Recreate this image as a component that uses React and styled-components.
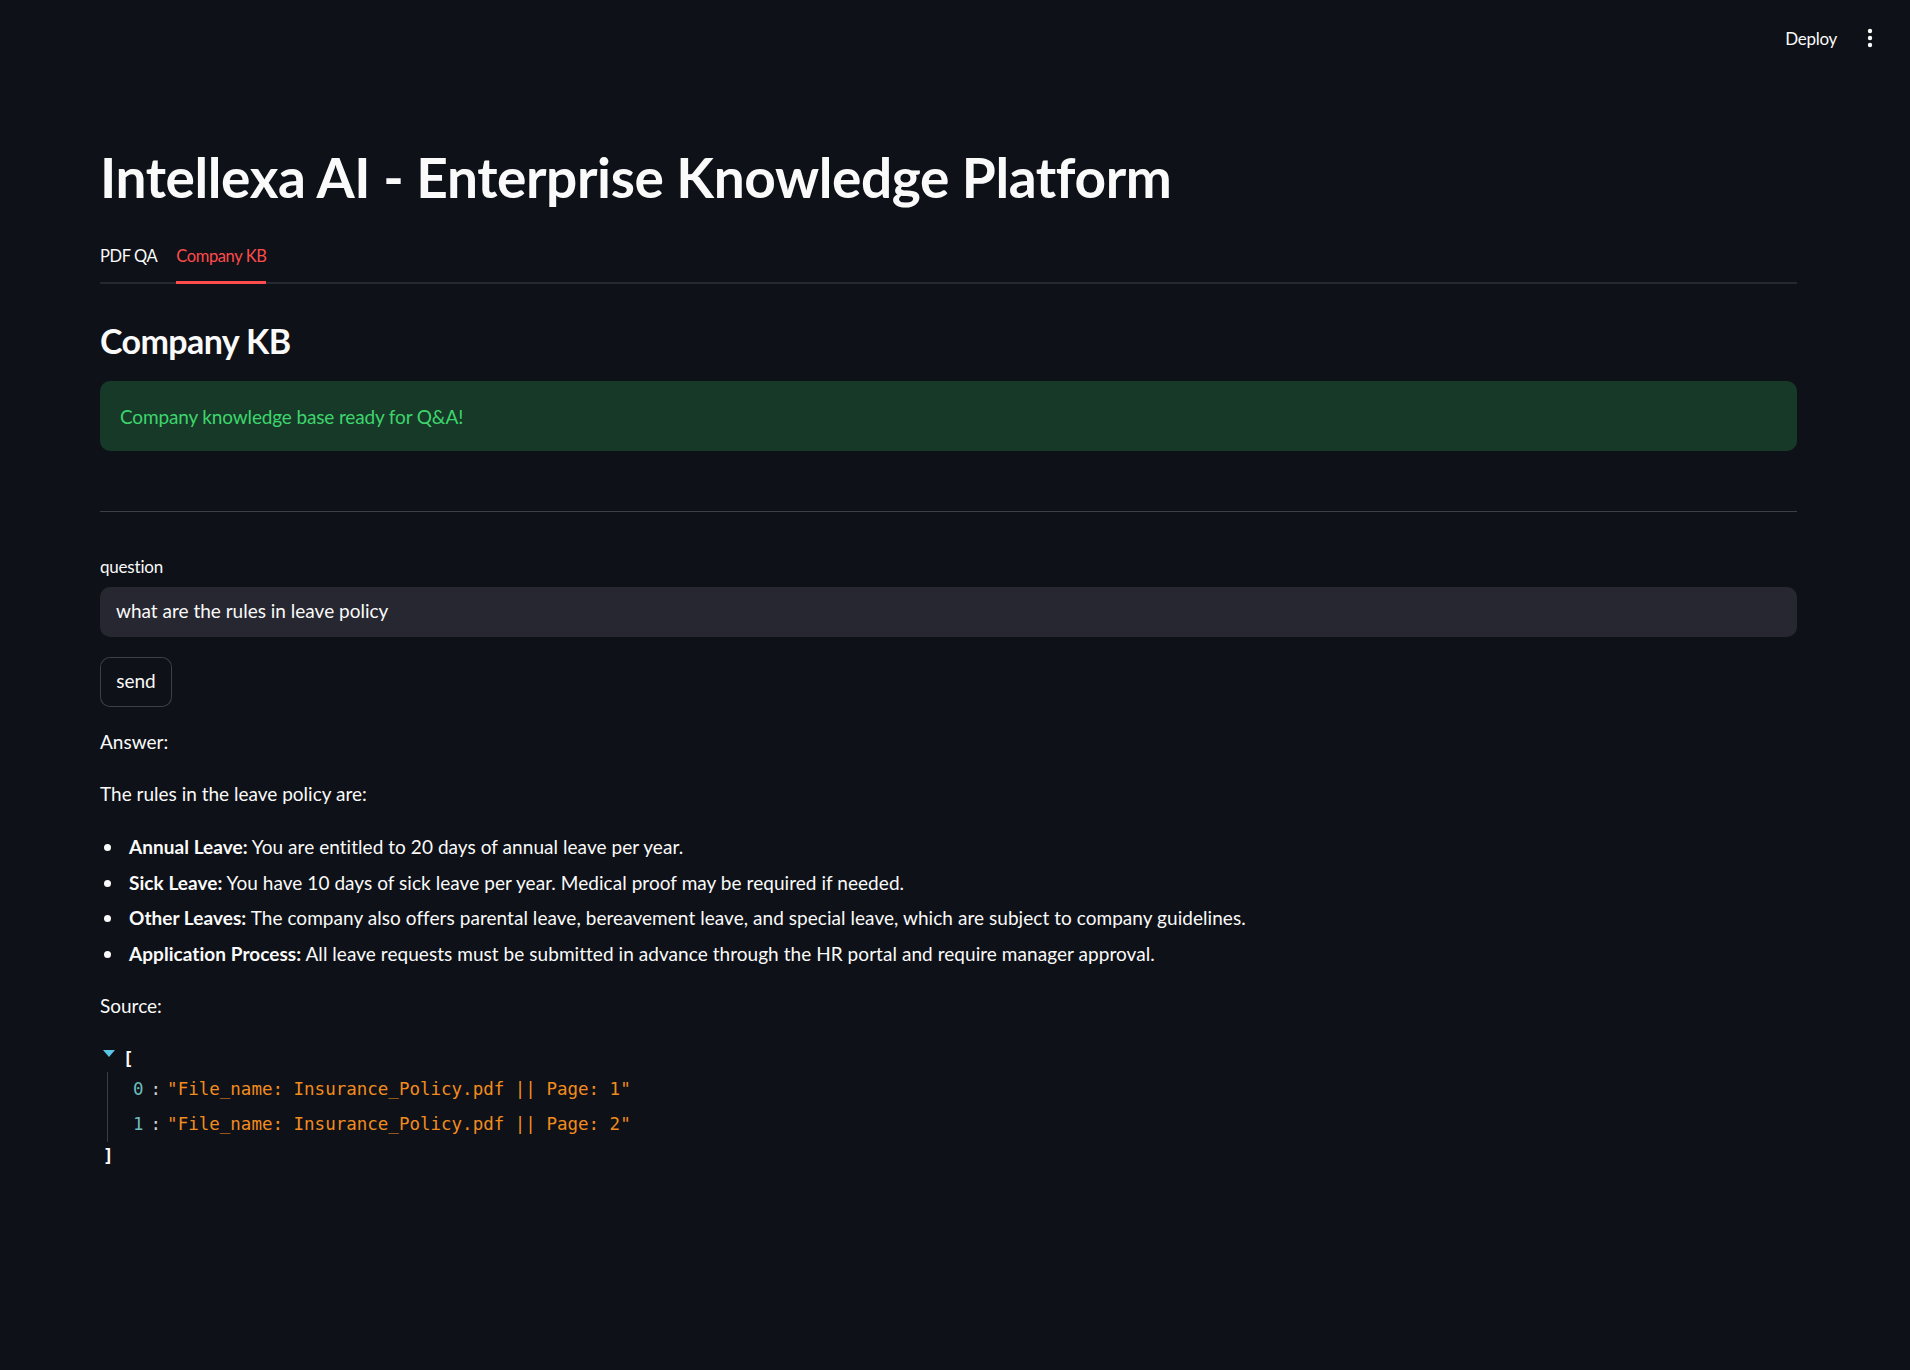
import React from 'react'
import styled, { createGlobalStyle } from 'styled-components'

const GlobalStyle = createGlobalStyle`
	html, body {
		margin: 0;
		padding: 0;
		background: #0e1117;
	}
	body {
		font-family: Lato, 'Noto Sans', sans-serif;
		color: #fafafa;
		min-height: 1370px;
	}
`

const Header = styled.header`
	height: 76px;
	display: flex;
	justify-content: flex-end;
	align-items: center;
	gap: 30px;
	padding-right: 37px;
	font-size: 17px;
`

const DeployLink = styled.span`
	color: #fafafa;
	letter-spacing: -0.3px;
`

const Main = styled.main`
	padding: 63px 113px 0 100px;
`

const Title = styled.h1`
	margin: 0;
	font-size: 55px;
	font-weight: 700;
	line-height: 76px;
	letter-spacing: -0.4px;
`

const TabList = styled.div`
	margin-top: 19px;
	display: flex;
	gap: 19px;
	border-bottom: 2px solid #262730;
	height: 48px;
`

const Tab = styled.div`
	display: flex;
	align-items: center;
	font-size: 16.5px;
	letter-spacing: -0.4px;
	color: ${(p) => (p.active ? '#ff4b4b' : '#fafafa')};
	border-bottom: 3px solid ${(p) => (p.active ? '#ff4b4b' : 'transparent')};
	margin-bottom: -2px;
	padding-bottom: 4px;
`

const SubTitle = styled.h3`
	margin: 35px 0 0;
	font-size: 34px;
	font-weight: 700;
	line-height: 44px;
	letter-spacing: -0.6px;
`

const SuccessBox = styled.div`
	margin-top: 18px;
	height: 70px;
	display: flex;
	align-items: center;
	padding: 0 20px;
	border-radius: 10px;
	background: #173928;
	color: #3dd56d;
	font-size: 19px;
	letter-spacing: -0.15px;
`

const Divider = styled.hr`
	margin: 60px 0 0;
	border: none;
	border-top: 1px solid rgba(250, 250, 250, 0.2);
`

const Label = styled.div`
	margin-top: 44px;
	font-size: 17px;
	line-height: 22px;
	letter-spacing: -0.2px;
`

const Input = styled.div`
	margin-top: 9px;
	height: 50px;
	display: flex;
	align-items: center;
	padding: 0 16px 3px;
	border-radius: 10px;
	background: #262730;
	font-size: 19px;
	letter-spacing: 0;
	box-sizing: border-box;
`

const Button = styled.button`
	margin-top: 20px;
	height: 50px;
	width: 72px;
	display: flex;
	align-items: center;
	justify-content: center;
	border: 1px solid rgba(250, 250, 250, 0.2);
	border-radius: 10px;
	background: #0e1117;
	color: #fafafa;
	font-family: inherit;
	font-size: 19px;
	padding: 0 0 3px;
`

const Para = styled.p`
	margin: ${(p) => p.top || 0}px 0 0;
	font-size: 19px;
	line-height: 30px;
	letter-spacing: 0;
`

const List = styled.ul`
	margin: 23px 0 0;
	padding-left: 29px;
	list-style: none;
	font-size: 19px;
	letter-spacing: 0.05px;
	li {
		line-height: 30px;
		margin-bottom: 5.7px;
	}
	li::before {
		content: '';
		display: inline-block;
		width: 7px;
		height: 7px;
		border-radius: 50%;
		background: #fafafa;
		margin-left: -25px;
		margin-right: 18px;
		vertical-align: 3px;
	}
	strong {
		font-weight: 700;
	}
`

const Json = styled.div`
	margin-top: 23px;
	font-family: 'DejaVu Sans Mono', 'Liberation Mono', monospace;
	font-size: 17.5px;
	line-height: 35px;
`

const JsonHead = styled.div`
	display: flex;
	align-items: center;
	gap: 8px;
	height: 30px;
	padding-left: 3px;
`

const Caret = styled.span`
	width: 0;
	height: 0;
	border-left: 6px solid transparent;
	border-right: 6px solid transparent;
	border-top: 7px solid #59c6e8;
	margin-top: -12px;
`

const Bracket = styled.span`
	color: #fafafa;
	font-weight: 700;
`

const JsonBody = styled.div`
	margin: -2px 0 0 7px;
	border-left: 1px solid #3b3d45;
	padding: 0 0 0 25px;
`

const JsonRow = styled.div`
	display: flex;
	white-space: pre;
`

const Key = styled.span`
	color: #6cbcbc;
`

const Colon = styled.span`
	color: #cfcfcf;
	margin: 0 6px 0 7px;
`

const Str = styled.span`
	color: #f28c1e;
`

const Closing = styled(Bracket)`
	display: block;
	padding-left: 3px;
	line-height: 28px;
`

function Dots() {
	return (
		<svg width="6" height="20" viewBox="0 0 6 20">
			<circle cx="3" cy="3" r="2.2" fill="#fafafa" />
			<circle cx="3" cy="10" r="2.2" fill="#fafafa" />
			<circle cx="3" cy="17" r="2.2" fill="#fafafa" />
		</svg>
	)
}

const rules = [
	['Annual Leave:', 'You are entitled to 20 days of annual leave per year.'],
	['Sick Leave:', 'You have 10 days of sick leave per year. Medical proof may be required if needed.'],
	[
		'Other Leaves:',
		'The company also offers parental leave, bereavement leave, and special leave, which are subject to company guidelines.',
	],
	[
		'Application Process:',
		'All leave requests must be submitted in advance through the HR portal and require manager approval.',
	],
]

const sources = ['File_name: Insurance_Policy.pdf || Page: 1', 'File_name: Insurance_Policy.pdf || Page: 2']

export default function App() {
	return (
		<>
			<GlobalStyle />
			<Header>
				<DeployLink>Deploy</DeployLink>
				<Dots />
			</Header>
			<Main>
				<Title>Intellexa AI - Enterprise Knowledge Platform</Title>
				<TabList>
					<Tab>PDF QA</Tab>
					<Tab active>Company KB</Tab>
				</TabList>
				<SubTitle>Company KB</SubTitle>
				<SuccessBox>Company knowledge base ready for Q&amp;A!</SuccessBox>
				<Divider />
				<Label>question</Label>
				<Input>what are the rules in leave policy</Input>
				<Button>send</Button>
				<Para top={20}>Answer:</Para>
				<Para top={22}>The rules in the leave policy are:</Para>
				<List>
					{rules.map(([b, t]) => (
						<li key={b}>
							<strong>{b}</strong> {t}
						</li>
					))}
				</List>
				<Para top={22}>Source:</Para>
				<Json>
					<JsonHead>
						<Caret />
						<Bracket>[</Bracket>
					</JsonHead>
					<JsonBody>
						{sources.map((s, i) => (
							<JsonRow key={i}>
								<Key>{i}</Key>
								<Colon>:</Colon>
								<Str>"{s}"</Str>
							</JsonRow>
						))}
					</JsonBody>
					<Closing>]</Closing>
				</Json>
			</Main>
		</>
	)
}
